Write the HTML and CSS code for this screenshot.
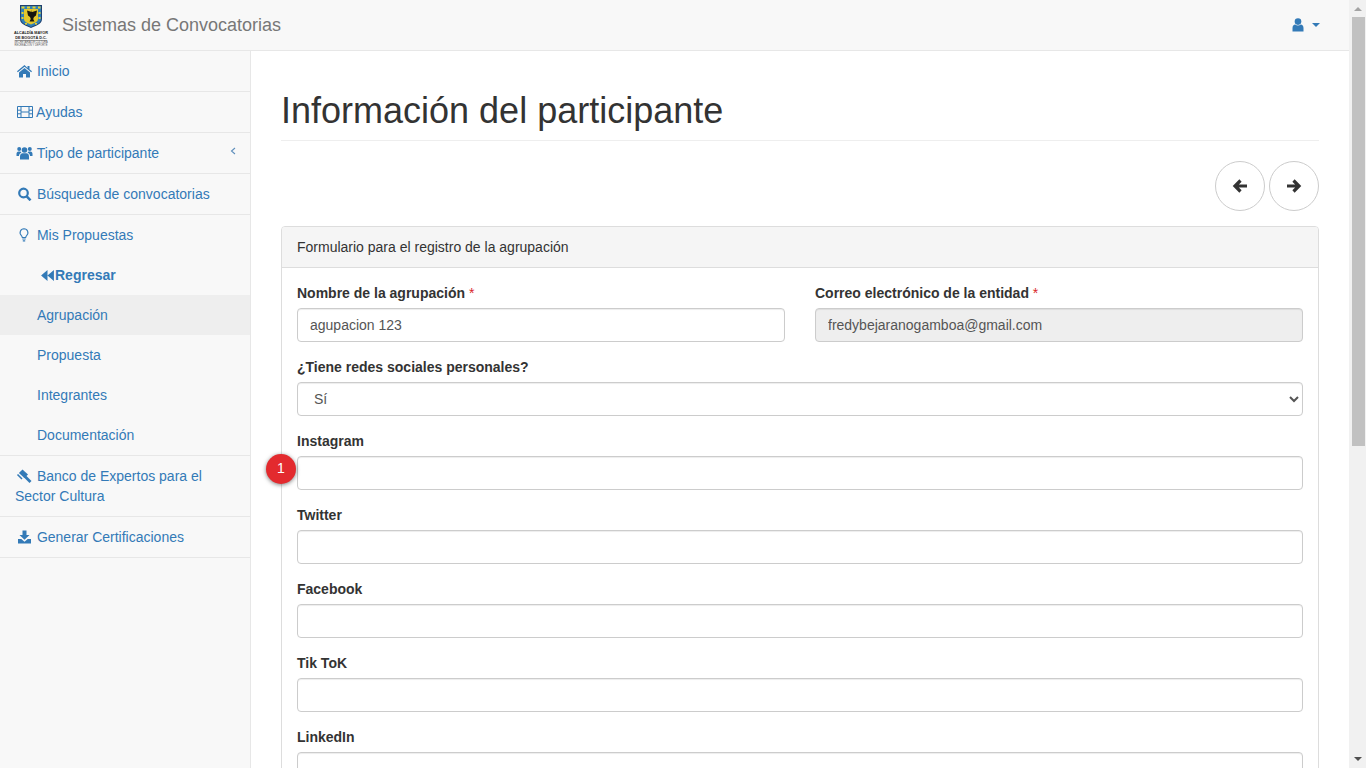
FILE: index.html
```html
<!DOCTYPE html>
<html lang="es">

<head>
    <meta charset="UTF-8">
    <meta name="viewport" content="width=device-width, initial-scale=1.0">
    <title>Sistemas de Convocatorias</title>
    <link rel="stylesheet" href="styles.css">
</head>

<body>
    <div class="frame">
        <div class="app">
            <!--barra superior-->
            <nav class="topbar">
                <a class="brand" href="#">
                    <svg class="logo" width="36" height="48" viewBox="0 0 36 48">
                        <path d="M7 4h22v14c0 6-7 6.500-11 9-4-2.500-11-3-11-9z" fill="#1f3f6e"/>
                        <path d="M8 5h20v13c0 5.200-6.300 5.700-10 8-3.700-2.300-10-2.800-10-8z" fill="#2f7fb8"/>
                        <path d="M8.500 5.500h3v2h-3zM14 5.500h3v2h-3zM19.500 5.500h3v2h-3zM25 5.500h2.500v2H25zM8.500 11h2v2h-2zM25.500 11h2v2h-2zM8.500 16h2v2h-2zM25.500 16h2v2h-2zM12 22h2v1.500h-2zM22 22h2v1.500h-2z" fill="#e6d22e"/>
                        <path d="M11 8h14v10c0 3.300-4 4-7 5.500-3-1.500-7-2.200-7-5.500z" fill="#e3c72c"/>
                        <path d="M18 8.500l1.200 2.500 4.800-1.500-1 5-2 1.500-.8 2 1.300 2.500H16.500l1.300-2.500-.8-2-2-1.500-1-5 4.800 1.500z" fill="#16160f"/>
                        <text class="logo-big" x="18" y="32.500" text-anchor="middle">ALCALDÍA MAYOR</text>
                        <text class="logo-big" x="18" y="37.500" text-anchor="middle">DE BOGOTÁ D.C.</text>
                        <rect x="2" y="39" width="32" height="0.600" fill="#777"/>
                        <text class="logo-small" x="18" y="42" text-anchor="middle">SECRETARÍA DE CULTURA</text>
                        <text class="logo-small" x="18" y="45" text-anchor="middle">RECREACIÓN Y DEPORTE</text>
                    </svg>
                    <span class="brand-name">Sistemas de Convocatorias</span>
                </a>
                <a class="user-menu" href="#">
                    <svg width="12" height="14" viewBox="0 0 12 14">
                        <circle cx="6" cy="3.600" r="3.300" fill="#337ab7"/>
                        <path d="M0.500 13.500v-3.500c0-2 1.200-3.200 2.700-3.400 1.600 1.300 4 1.300 5.600 0 1.500.2 2.700 1.400 2.700 3.400v3.500z" fill="#337ab7"/>
                    </svg>
                    <span class="caret"></span>
                </a>
            </nav>

            <div class="wrapper">
                <!--menu lateral-->
                <aside class="sidebar">
                    <ul class="side-menu">
                        <li><a href="#">
                            <svg class="ico" viewBox="0 0 18 14"><path d="M9.500 1l-7.500 6.300.8 1 6.700-5.500 6.700 5.500.8-1-2.500-2.100V2h-2v1.900z"/><path d="M4 8.500L9.500 4 15 8.500v5h-4v-3.500H8v3.500H4z"/></svg>
                            Inicio</a></li>
                        <li><a href="#">
                            <svg class="ico ico-film" viewBox="0 0 18 14"><path d="M2.500 1.500h15v11h-15zM6 1.500v11M14 1.500v11M2.500 5.200H6M2.500 8.800H6M14 5.200h3.500M14 8.800h3.500M6 7h8" fill="none" stroke="#337ab7" stroke-width="1"/></svg>
                            Ayudas</a></li>
                        <li><a class="has-arrow" href="#">
                            <span><svg class="ico" viewBox="0 0 18 14"><circle cx="9.500" cy="4" r="2.800"/><path d="M5 13.500v-3c0-2 1.300-3.200 2.500-3.200h4c1.200 0 2.500 1.200 2.500 3.200v3z"/><circle cx="4.200" cy="3" r="2"/><path d="M1.500 10V8c0-1.800.8-2.600 2-2.600h2c.3.500.6 1 1 1.300-1.800.6-2.500 1.700-2.500 3.300z"/><circle cx="14.800" cy="3" r="2"/><path d="M17.500 10V8c0-1.800-.8-2.600-2-2.600h-2c-.3.500-.6 1-1 1.300 1.800.6 2.500 1.700 2.500 3.300z"/></svg>
                            Tipo de participante</span>
                            <svg class="arrow" width="6" height="8" viewBox="0 0 6 8"><path d="M5 1L1.500 4 5 7" fill="none" stroke="#5f8fbc" stroke-width="1.100"/></svg>
                        </a></li>
                        <li><a href="#">
                            <svg class="ico" viewBox="0 0 18 14"><circle cx="8.500" cy="6" r="4.300" fill="none" stroke="#337ab7" stroke-width="2.200"/><path d="M11.500 9.200l4 4.100" fill="none" stroke="#337ab7" stroke-width="2.600"/></svg>
                            Búsqueda de convocatorias</a></li>
                        <li class="open">
                            <a href="#">
                                <svg class="ico" viewBox="0 0 18 14"><path d="M9 .8a3.900 3.900 0 0 0-2.600 6.800c.6.600.8 1.200.9 1.900h3.400c.1-.7.300-1.300.9-1.900A3.900 3.900 0 0 0 9 .8z" fill="none" stroke="#337ab7" stroke-width="1.100"/><path d="M7.300 10.400h3.400v1H7.300zM7.800 12.200h2.400v1.200H7.800z"/></svg>
                                Mis Propuestas</a>
                            <ul class="sub-menu">
                                <li><a class="back" href="#"><svg class="ico-back" width="15" height="11" viewBox="0 0 14 12"><path d="M7 0L0 6l7 6zM14 0L7 6l7 6z"/></svg>Regresar</a></li>
                                <li><a class="active" href="#">Agrupación</a></li>
                                <li><a href="#">Propuesta</a></li>
                                <li><a href="#">Integrantes</a></li>
                                <li><a href="#">Documentación</a></li>
                            </ul>
                        </li>
                        <li><a href="#">
                            <svg class="ico" viewBox="0 0 18 14"><path d="M7.500.5l5.500 5-3.600 3.600-5.500-5z"/><path d="M9.500 7l6 6" fill="none" stroke="#337ab7" stroke-width="2.800"/><path d="M2.500 5.500l4.500 4.500" fill="none" stroke="#337ab7" stroke-width="1.600"/></svg>
                            Banco de Expertos para el Sector Cultura</a></li>
                        <li><a href="#">
                            <svg class="ico" viewBox="0 0 18 14"><path d="M7.500.5h4v4.500h3l-5 4.800-5-4.800h3z"/><path d="M3 9h3.300l3.200 2.800L12.700 9H16v4.500H3z"/></svg>
                            Generar Certificaciones</a></li>
                    </ul>
                </aside>

                <!--contenido-->
                <main class="page">
                    <h1 class="page-title">Información del participante</h1>

                    <div class="pager">
                        <a class="circle" href="#"><svg width="16" height="16" viewBox="0 0 16 16"><path d="M8.500 2.500L3 8l5.500 5.500M3.500 8H15" fill="none" stroke="#333" stroke-width="3.200"/></svg></a>
                        <a class="circle" href="#"><svg width="16" height="16" viewBox="0 0 16 16"><path d="M7.500 2.500L13 8l-5.500 5.500M12.500 8H1" fill="none" stroke="#333" stroke-width="3.200"/></svg></a>
                    </div>

                    <section class="panel">
                        <div class="panel-heading">Formulario para el registro de la agrupación</div>
                        <form class="panel-body">
                            <div class="row">
                                <div class="field">
                                    <label>Nombre de la agrupación <span class="req">*</span></label>
                                    <input class="control" type="text" value="agupacion 123">
                                </div>
                                <div class="field">
                                    <label>Correo electrónico de la entidad <span class="req">*</span></label>
                                    <input class="control" type="text" value="fredybejaranogamboa@gmail.com" disabled>
                                </div>
                            </div>
                            <div class="field">
                                <label>¿Tiene redes sociales personales?</label>
                                <select class="control">
                                    <option>Sí</option>
                                    <option>No</option>
                                </select>
                            </div>
                            <div class="field has-badge">
                                <span class="badge">1</span>
                                <label>Instagram</label>
                                <input class="control" type="text">
                            </div>
                            <div class="field">
                                <label>Twitter</label>
                                <input class="control" type="text">
                            </div>
                            <div class="field">
                                <label>Facebook</label>
                                <input class="control" type="text">
                            </div>
                            <div class="field">
                                <label>Tik ToK</label>
                                <input class="control" type="text">
                            </div>
                            <div class="field">
                                <label>LinkedIn</label>
                                <input class="control" type="text">
                            </div>
                        </form>
                    </section>
                </main>
            </div>
        </div>

        <!--barra de desplazamiento-->
        <div class="scrollbar">
            <span class="scroll-up"></span>
            <span class="scroll-thumb"></span>
            <span class="scroll-down"></span>
        </div>
    </div>
</body>

</html>
```

FILE: styles.css
```css
* {
    box-sizing: border-box;
}

body {
    margin: 0;
    font-family: "Liberation Sans", Arial, sans-serif;
    font-size: 14px;
    line-height: 20px;
    color: #333;
    background: #fff;
}

a {
    color: #337ab7;
    text-decoration: none;
}

ul {
    list-style: none;
    margin: 0;
    padding: 0;
}

.frame {
    display: flex;
    height: 100vh;
    overflow: hidden;
}

.app {
    flex: 1;
    min-width: 0;
    height: 100%;
    overflow: hidden;
}

/* scrollbar */
.scrollbar {
    flex: 0 0 17px;
    display: flex;
    flex-direction: column;
    align-items: center;
    padding: 7px 1px 7px 2px;
    background: #f1f1f1;
}

.scroll-up {
    width: 0;
    height: 0;
    border-bottom: 4px solid #a3a3a3;
    border-left: 4px solid transparent;
    border-right: 4px solid transparent;
}

.scroll-thumb {
    width: 13px;
    height: 429px;
    margin-top: 6px;
    background: #c1c1c1;
}

.scroll-down {
    width: 0;
    height: 0;
    margin-top: auto;
    border-top: 4px solid #505050;
    border-left: 4px solid transparent;
    border-right: 4px solid transparent;
}

/* top bar */
.topbar {
    display: flex;
    justify-content: space-between;
    align-items: center;
    height: 51px;
    background: #f8f8f8;
    border-bottom: 1px solid #e7e7e7;
    padding-right: 29px;
}

.brand {
    display: flex;
    align-items: center;
    padding-left: 13px;
}

.logo {
    display: block;
    margin-top: -1px;
}

.logo-big {
    font-size: 3.800px;
    font-weight: bold;
    fill: #222;
}

.logo-small {
    font-size: 2.600px;
    fill: #555;
}

.brand-name {
    margin-left: 13px;
    font-size: 18px;
    color: #777;
}

.user-menu {
    display: flex;
    align-items: center;
}

.caret {
    width: 0;
    height: 0;
    margin-left: 8px;
    border-top: 4px solid #337ab7;
    border-left: 4px solid transparent;
    border-right: 4px solid transparent;
}

/* sidebar */
.wrapper {
    display: flex;
    min-height: 717px;
}

.sidebar {
    flex: 0 0 251px;
    background: #f8f8f8;
    border-right: 1px solid #e7e7e7;
}

.side-menu > li {
    border-bottom: 1px solid #e7e7e7;
}

.side-menu a {
    display: block;
    padding: 10px 15px;
}

.side-menu .has-arrow {
    display: flex;
    justify-content: space-between;
}

.arrow {
    margin: 4px 0 0;
    transform: translateX(1px);
}

.ico {
    width: 18px;
    height: 14px;
    vertical-align: -2px;
    fill: #337ab7;
}

.side-menu .sub-menu a {
    padding-left: 37px;
}

.side-menu .sub-menu a.back {
    padding-left: 40px;
    font-weight: bold;
}

.ico-back {
    fill: #337ab7;
    vertical-align: -1px;
}

.sub-menu a.active {
    background: #eee;
}

/* content */
.page {
    flex: 1;
    min-width: 0;
    padding: 0 30px 40px;
}

.page-title {
    margin: 40px 0 20px;
    padding-bottom: 9px;
    border-bottom: 1px solid #eee;
    font-size: 36px;
    font-weight: 500;
    line-height: 1.1;
}

.pager {
    display: flex;
    justify-content: flex-end;
    gap: 4px;
    margin-bottom: 15px;
}

.circle {
    display: flex;
    align-items: center;
    justify-content: center;
    width: 50px;
    height: 50px;
    border: 1px solid #ccc;
    border-radius: 50%;
    background: #fff;
}

.panel {
    border: 1px solid #ddd;
    border-radius: 4px;
    background: #fff;
}

.panel-heading {
    padding: 10px 15px;
    background: #f5f5f5;
    border-bottom: 1px solid #ddd;
    border-radius: 3px 3px 0 0;
}

.panel-body {
    padding: 15px;
}

.row {
    display: grid;
    grid-template-columns: 1fr 1fr;
    gap: 30px;
}

.field {
    margin-bottom: 15px;
}

.has-badge {
    position: relative;
}

.field label {
    display: block;
    margin-bottom: 5px;
    font-weight: bold;
}

.req {
    color: #d9262b;
    font-weight: normal;
}

.control {
    display: block;
    width: 100%;
    height: 34px;
    padding: 6px 12px;
    font-family: inherit;
    font-size: 14px;
    line-height: 20px;
    color: #555;
    background: #fff;
    border: 1px solid #ccc;
    border-radius: 4px;
    box-shadow: inset 0 1px 1px rgba(0, 0, 0, 0.075);
}

.control:disabled {
    background: #eee;
    opacity: 1;
}

.badge {
    position: absolute;
    left: -31px;
    top: 23px;
    width: 30px;
    height: 30px;
    border-radius: 50%;
    background: #e32a2e;
    color: #fff;
    font-size: 14px;
    line-height: 29px;
    text-align: center;
    box-shadow: 0 1px 4px rgba(0, 0, 0, 0.5);
}
```
